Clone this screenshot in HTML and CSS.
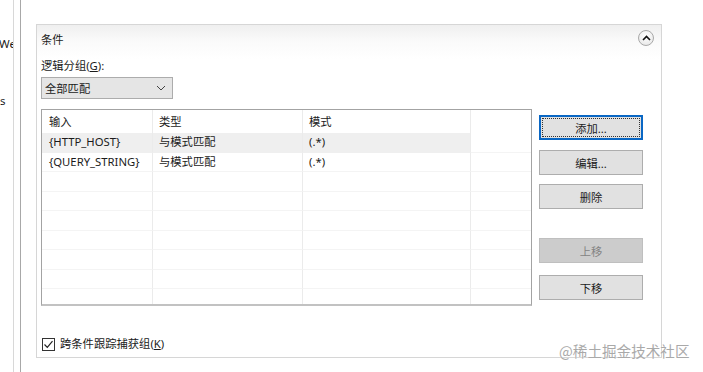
FILE: index.html
```html
<!DOCTYPE html>
<html lang="zh-CN">
<head>
<meta charset="utf-8">
<title>条件</title>
<link rel="stylesheet" href="styles.css">
</head>
<body>
<div class="screen">
  <aside class="side">
    <span class="side-t1">Web</span>
    <span class="side-t2">ns</span>
  </aside>
  <div class="gutter"></div>
  <main class="main">
    <section class="panel">
      <header class="panel-head">
        <span class="panel-title">条件</span>
        <span class="collapse">
          <svg width="9" height="6" viewBox="0 0 9 6"><path d="M1 5 L4.5 1.5 L8 5" fill="none" stroke="#111" stroke-width="1.6"/></svg>
        </span>
      </header>
      <div class="field-label">逻辑分组(<u>G</u>):</div>
      <div class="select">
        <span>全部匹配</span>
        <svg width="10" height="6" viewBox="0 0 10 6"><path d="M1 1 L5 5 L9 1" fill="none" stroke="#444" stroke-width="1"/></svg>
      </div>
      <div class="body">
        <div class="table">
          <div class="cell head">输入</div>
          <div class="cell head">类型</div>
          <div class="cell head">模式</div>
          <div class="cell head last"></div>

          <div class="cell sel">{HTTP_HOST}</div>
          <div class="cell sel">与模式匹配</div>
          <div class="cell sel">(.*)</div>
          <div class="cell last"></div>

          <div class="cell">{QUERY_STRING}</div>
          <div class="cell">与模式匹配</div>
          <div class="cell">(.*)</div>
          <div class="cell last"></div>

          <div class="cell"></div><div class="cell"></div><div class="cell"></div><div class="cell last"></div>
          <div class="cell"></div><div class="cell"></div><div class="cell"></div><div class="cell last"></div>
          <div class="cell"></div><div class="cell"></div><div class="cell"></div><div class="cell last"></div>
          <div class="cell"></div><div class="cell"></div><div class="cell"></div><div class="cell last"></div>
          <div class="cell"></div><div class="cell"></div><div class="cell"></div><div class="cell last"></div>
          <div class="cell"></div><div class="cell"></div><div class="cell"></div><div class="cell last"></div>
          <div class="cell end"></div><div class="cell end"></div><div class="cell end"></div><div class="cell end last"></div>
        </div>
        <div class="buttons">
          <button class="btn focus b-add"><span>添加...</span></button>
          <button class="btn b-edit">编辑...</button>
          <button class="btn b-del">删除</button>
          <button class="btn disabled b-up">上移</button>
          <button class="btn b-down">下移</button>
        </div>
      </div>
      <label class="check">
        <span class="box">
          <svg width="11" height="11" viewBox="0 0 11 11"><path d="M1.5 5.5 L4.3 8.3 L9.5 2.2" fill="none" stroke="#222" stroke-width="1.2"/></svg>
        </span>
        <span>跨条件跟踪捕获组(<u>K</u>)</span>
      </label>
    </section>
  </main>
</div>
<div class="watermark">@稀土掘金技术社区</div>
</body>
</html>
```

FILE: styles.css
```css
* { box-sizing: border-box; }
html, body { margin: 0; padding: 0; background: #fff; }
body {
  width: 703px;
  height: 372px;
  overflow: hidden;
  position: relative;
  font-family: "Noto Sans", "Noto Sans CJK SC", sans-serif;
  font-size: 11.3px;
  color: #1b1b1b;
}
.screen { display: flex; height: 372px; }

.side {
  width: 14px;
  border-right: 1px solid #d8d8d8;
  overflow: hidden;
  display: flex;
  flex-direction: column;
  align-items: flex-start;
  font-size: 11.5px;
  line-height: 16px;
  white-space: nowrap;
}
.side-t1 { margin-top: 36px; margin-left: -1px; }
.side-t2 { margin-top: 41px; margin-left: -7px; }

.gutter { width: 7px; border-right: 1px solid #a8a8a8; }

.main { padding-left: 15px; padding-top: 24px; }

.panel {
  width: 626px;
  height: 334px;
  border: 1px solid #d6d6d6;
  padding-left: 4px;
  background: linear-gradient(#efefef 0px, #fafafa 16px, #fff 34px, #fff 100%);
  display: flex;
  flex-direction: column;
}

.panel-head {
  height: 33px;
  padding-top: 5px;
  padding-right: 7px;
  display: flex;
  justify-content: space-between;
  align-items: flex-start;
}
.panel-title { margin-top: 2px; line-height: 16px; }
.collapse {
  width: 16px;
  height: 16px;
  border-radius: 50%;
  border: 1px solid #a9a9a9;
  background: radial-gradient(circle at 50% 35%, #ffffff, #e4e4e4);
  display: flex;
  align-items: center;
  justify-content: center;
  padding-bottom: 1px;
}

.field-label { line-height: 16px; }
u { text-decoration: underline; text-underline-offset: 1px; }

.select {
  margin-top: 3px;
  width: 132px;
  height: 22px;
  border: 1px solid #acacac;
  background: #e5e5e5;
  display: flex;
  align-items: center;
  justify-content: space-between;
  padding: 0 6px 0 3px;
}

.body { display: flex; margin-top: 10px; align-items: flex-start; }

.table {
  width: 491px;
  height: 197px;
  border: 1px solid #a3a3a3;
  border-bottom: 2px solid #c2c2c2;
  display: grid;
  grid-template-columns: 111px 150px 168px 1fr;
  grid-template-rows: 23px repeat(8, 19.5px) 1fr;
  background: #fff;
}
.cell {
  border-right: 1px solid #ebebeb;
  border-bottom: 1px solid #f4f4f4;
  padding-left: 6px;
  line-height: 18px;
  white-space: nowrap;
  overflow: hidden;
}
.cell:first-child, .cell:nth-child(4n+1) { padding-left: 7px; }
.cell.head { border-bottom: none; line-height: 23px; }
.cell.last { border-right: none; }
.cell.end { border-bottom: none; }
.cell.sel { background: #efefef; border-bottom-color: #efefef; }

.buttons {
  margin-left: 7px;
  width: 104px;
  display: flex;
  flex-direction: column;
}
.btn {
  font: inherit;
  color: #1b1b1b;
  height: 25px;
  width: 104px;
  border: 1px solid #adadad;
  background: #e1e1e1;
  padding: 0;
  display: flex;
  align-items: center;
  justify-content: center;
}
.btn.focus {
  border: 2px solid #0a67c4;
  padding: 1px;
}
.btn.focus span {
  width: 100%;
  height: 100%;
  border: 1px dotted #333;
  display: flex;
  align-items: center;
  justify-content: center;
}
.btn.disabled { background: #cccccc; border-color: #bfbfbf; color: #838383; }
.b-add { margin-top: 6px; }
.b-edit { margin-top: 10px; }
.b-del { margin-top: 9px; }
.b-up { margin-top: 29px; }
.b-down { margin-top: 12px; }

.check {
  margin-top: 30px;
  margin-left: 1px;
  display: flex;
  align-items: center;
  line-height: 16px;
}
.box {
  width: 13px;
  height: 13px;
  border: 1px solid #333;
  background: #fff;
  display: flex;
  align-items: center;
  justify-content: center;
  margin-right: 5px;
}

.watermark {
  position: absolute;
  left: 559px;
  top: 342px;
  font-family: "Noto Sans CJK SC", sans-serif;
  font-size: 14.6px;
  line-height: 18px;
  color: #a9a9a9;
  text-shadow: 0 0 1px #fff;
  white-space: nowrap;
}
```
